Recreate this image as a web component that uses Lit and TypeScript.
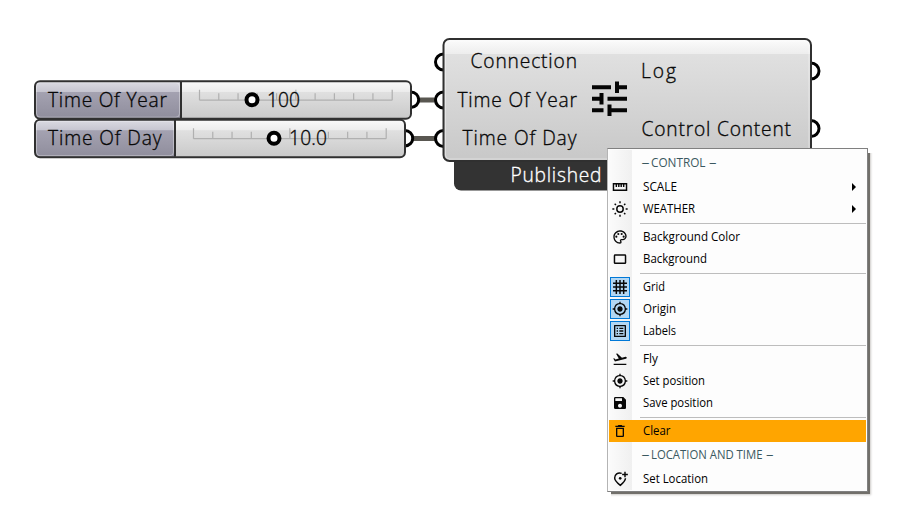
import { LitElement, html, svg, css } from "lit";
import { customElement, property } from "lit/decorators.js";
import { classMap } from "lit/directives/class-map.js";

type Entry =
  | { kind: "item"; label: string; width: number; icon: string; sub?: boolean; checked?: boolean; hot?: boolean }
  | { kind: "head"; label: string; width: number }
  | { kind: "sep" };

const ICONS: Record<string, unknown> = {
  ruler: svg`<path d="M2.2 7h19.6v10h-19.6z M6.5 7v5 M10.2 7v5 M13.8 7v5 M17.5 7v5" class="line"/>`,
  sun: svg`<circle cx="12" cy="12" r="4.8" class="line"/><path class="line" d="M12 .5v3M12 20.500v3M.5 12h3M20.500 12h3M4 4l1.900 1.900M18.100 18.100l1.900 1.900M20 4l-1.900 1.900M5.900 18.100l-1.900 1.900"/>`,
  palette: svg`<path d="M12 22C6.490 22 2 17.510 2 12S6.490 2 12 2s10 4.040 10 9c0 3.310-2.690 6-6 6h-1.770c-.28 0-.5.22-.5.5 0 .12.050.23.130.33.410.47.640 1.060.640 1.670A2.500 2.500 0 0 1 12 22zm0-18c-4.410 0-8 3.590-8 8s3.590 8 8 8c.28 0 .5-.22.5-.5a.54.54 0 0 0-.14-.35c-.41-.46-.63-1.050-.63-1.650a2.500 2.500 0 0 1 2.500-2.500H16c2.210 0 4-1.790 4-4 0-3.860-3.590-7-8-7z"/><circle cx="6.500" cy="11.500" r="1.600"/><circle cx="9.500" cy="7.500" r="1.600"/><circle cx="14.500" cy="7.500" r="1.600"/><circle cx="17.500" cy="11.500" r="1.600"/>`,
  frame: svg`<rect x="3.700" y="6" width="16.600" height="12.500" rx="1" class="line"/>`,
  grid: svg`<path class="line" d="M6.500 1.500v21M12 1.500v21M17.500 1.500v21M1.500 6.500h21M1.500 12h21M1.500 17.500h21"/>`,
  target: svg`<path d="M12 8c-2.210 0-4 1.790-4 4s1.790 4 4 4 4-1.790 4-4-1.790-4-4-4zm8.940 3A8.994 8.994 0 0 0 13 3.060V1h-2v2.060A8.994 8.994 0 0 0 3.060 11H1v2h2.060A8.994 8.994 0 0 0 11 20.940V23h2v-2.060A8.994 8.994 0 0 0 20.940 13H23v-2h-2.060zM12 19c-3.870 0-7-3.130-7-7s3.130-7 7-7 7 3.130 7 7-3.130 7-7 7z"/>`,
  list: svg`<path d="M19 5v14H5V5h14m1.100-2H3.900c-.5 0-.9.4-.9.9v16.200c0 .4.400.9.900.9h16.200c.4 0 .9-.5.900-.9V3.900c0-.5-.5-.9-.9-.9zM11 7h6v2h-6V7zm0 4h6v2h-6v-2zm0 4h6v2h-6zM7 7h2v2H7zm0 4h2v2H7zm0 4h2v2H7z"/>`,
  plane: svg`<path d="M2.500 19h19v2h-19v-2zm19.570-9.360c-.21-.8-1.040-1.280-1.840-1.060L14.920 10l-6.900-6.430-1.930.51 4.140 7.170-4.970 1.330-1.970-1.540-1.450.39 2.590 4.490L21 11.490c.81-.23 1.280-1.050 1.070-1.850z"/>`,
  save: svg`<path d="M17 3H5a2 2 0 0 0-2 2v14a2 2 0 0 0 2 2h14c1.100 0 2-.9 2-2V7l-4-4zm-5 16c-1.660 0-3-1.340-3-3s1.340-3 3-3 3 1.340 3 3-1.340 3-3 3zm3-10H5V5h10v4z"/>`,
  trash: svg`<path d="M6 19c0 1.100.9 2 2 2h8c1.100 0 2-.9 2-2V7H6v12zM8 9h8v10H8V9zm7.500-5l-1-1h-5l-1 1H5v2h14V4z"/>`,
  pin: svg`<path class="line" d="M14.500 3.500C8.500 1.500 4 5.500 4 10.500c0 4.200 4 7.500 8.500 11 4.200-3.500 7.500-6.500 7.700-10.500M19.500 1v8.500M15.200 5.300h8.600"/><circle cx="12.300" cy="11" r="2"/>`,
};

const ENTRIES: Entry[] = [
  { kind: "head", label: "CONTROL", width: 55 },
  { kind: "item", label: "SCALE", width: 34, icon: "ruler", sub: true },
  { kind: "item", label: "WEATHER", width: 52, icon: "sun", sub: true },
  { kind: "sep" },
  { kind: "item", label: "Background Color", width: 97, icon: "palette" },
  { kind: "item", label: "Background", width: 64, icon: "frame" },
  { kind: "sep" },
  { kind: "item", label: "Grid", width: 22, icon: "grid", checked: true },
  { kind: "item", label: "Origin", width: 33, icon: "target", checked: true },
  { kind: "item", label: "Labels", width: 33, icon: "list", checked: true },
  { kind: "sep" },
  { kind: "item", label: "Fly", width: 15, icon: "plane" },
  { kind: "item", label: "Set position", width: 62, icon: "target" },
  { kind: "item", label: "Save position", width: 70, icon: "save" },
  { kind: "sep" },
  { kind: "item", label: "Clear", width: 27.500, icon: "trash", hot: true },
  { kind: "head", label: "LOCATION AND TIME", width: 112 },
  { kind: "item", label: "Set Location", width: 65, icon: "pin" },
];

@customElement("context-menu")
export class ContextMenu extends LitElement {
  @property({ attribute: false }) entries: Entry[] = [];

  static styles = css`
    :host {
      display: block;
      box-sizing: border-box;
      width: 261px;
      height: 344px;
      padding: 1px;
      border: 1px solid #808080;
      border-left-color: #b4b4b4;
      background: linear-gradient(90deg, #fbfbfb, #f0f0f0) 1px 1px / 23px 340px no-repeat, #fdfdfd;
      box-shadow: 1.500px 1.500px 1px rgba(90, 87, 82, 0.8), 3px 3px 2px rgba(60, 50, 40, 0.25);
      clip-path: polygon(0 0, 261px 0, 261px 5px, 270px 5px, 270px 354px, 4px 354px, 4px 344px, 0 344px);
    }
    .row {
      display: flex;
      align-items: center;
      height: 22px;
    }
    .head {
      height: 26px;
      padding-left: 33px;
    }
    .hot { background: #ffa500; }
    .sep {
      height: 6px;
      padding-left: 31px;
    }
    .sep::before {
      content: "";
      flex: 1;
      height: 1px;
      background: #bdbdbd;
    }
    .cell {
      display: flex;
      align-items: center;
      justify-content: center;
      box-sizing: border-box;
      width: 20px;
      height: 20px;
      margin: 0 13px 0 1px;
    }
    .checked {
      background: #b3d7f3;
      border: 1px solid #0078d7;
    }
    .icon {
      flex: none;
      width: 16px;
      height: 16px;
      fill: #080808;
    }
    .line {
      fill: none;
      stroke: #080808;
      stroke-width: 2.200;
    }
    .text {
      height: 18px;
      overflow: visible;
      font: 12.400px "Open Sans", "Noto Sans", sans-serif;
      fill: #000;
    }
    .head .text { fill: #3a5860; }
    .arrow {
      margin-left: auto;
      margin-right: 10px;
      border-left: 4px solid #000;
      border-top: 4px solid transparent;
      border-bottom: 4px solid transparent;
    }
  `;

  private run(label: string, x: number, width: number) {
    return svg`<text x=${x} y="13" textLength=${width} lengthAdjust="spacingAndGlyphs">${label}</text>`;
  }

  render() {
    return this.entries.map((e) => {
      if (e.kind === "sep") return html`<div class="row sep"></div>`;
      if (e.kind === "head") {
        return html`<div class="row head">
          <svg class="text" width=${e.width + 19}>
            ${this.run("–", -0.5, 8)}${this.run(e.label, 9, e.width - 0.5)}${this.run("–", e.width + 12, 7.5)}
          </svg>
        </div>`;
      }
      return html`<div class=${classMap({ row: true, hot: !!e.hot })}>
        <span class=${classMap({ cell: true, checked: !!e.checked })}>
          <svg class="icon" viewBox="0 0 24 24">${ICONS[e.icon]}</svg>
        </span>
        <svg class="text" width=${e.width}>${this.run(e.label, 0, e.width)}</svg>
        ${e.sub ? html`<span class="arrow"></span>` : null}
      </div>`;
    });
  }
}

@customElement("app-root")
export class AppRoot extends LitElement {
  static styles = css`
    :host {
      display: block;
      position: relative;
      width: 915px;
      height: 525px;
      overflow: hidden;
      background: #fff;
    }
    .canvas { display: block; }
    .menu {
      position: absolute;
      left: 607px;
      top: 148px;
    }
    .label {
      font: 300 19.200px "Open Sans", "Noto Sans", sans-serif;
      fill: #080808;
      stroke: #080808;
      stroke-width: 0.350;
    }
    .light { fill: #fff; stroke: #fff; }
    .port { fill: #fff; stroke: #000; stroke-width: 3; }
    .grip { fill: #fff; stroke: #000; stroke-width: 4; }
    .wire { stroke: #595751; stroke-width: 5; }
    .edge { fill: none; stroke: #303030; stroke-width: 2; }
    .tick { fill: none; stroke: #b0b0b0; stroke-width: 1.200; }
    .glyph { stroke: #050505; stroke-width: 4; }
  `;

  private label(value: string, x: number, y: number, width: number, cls = "") {
    return svg`<text class="label ${cls}" x=${x} y=${y} textLength=${width}>${value}</text>`;
  }

  private slider(y: number, right: number, split: number, name: string, nameWidth: number,
    start: number, grip: number, value: string, valueX: number, valueWidth: number) {
    const base = y + 19;
    const ticks = Array.from({ length: 11 }, (_, i) =>
      `M${start + i * 19.270} ${base}v${i % 5 === 0 ? -10.500 : -7}`).join("");
    return svg`
      <circle class="port" cx=${right} cy=${y + 18.500} r="7.700"/>
      <rect x="35" y=${y} width=${right - 35} height="37.500" rx="5" fill="url(#body)"/>
      <path d="M${split} ${y}H40a5 5 0 0 0-5 5v27.500a5 5 0 0 0 5 5H${split}z" fill="url(#name)"/>
      <rect x="36.500" y=${y + 1.500} width=${split - 38} height="34.500" rx="3.500" fill="none" stroke="#fff" stroke-opacity=".35"/>
      <path d="M${split} ${y}v37" class="edge"/>
      <rect x="35" y=${y} width=${right - 35} height="37.500" rx="5" class="edge"/>
      <path class="tick" d="M${start} ${base}h192.700${ticks}"/>
      <circle class="grip" cx=${grip} cy=${y + 18.500} r="5.500"/>
      ${this.label(name, 48, y + 25.500, nameWidth)}
      ${this.label(value, valueX, y + 25.500, valueWidth)}`;
  }

  render() {
    return html`
      <svg class="canvas" width="915" height="525" viewBox="0 0 915 525">
        <defs>
          <linearGradient id="body" x2="0" y2="1">
            <stop offset="0" stop-color="#fafafa"/><stop offset=".28" stop-color="#ececec"/>
            <stop offset=".29" stop-color="#e0e0e0"/><stop offset="1" stop-color="#c9c9c9"/>
          </linearGradient>
          <linearGradient id="name" x2="0" y2="1">
            <stop offset="0" stop-color="#dcdce3"/><stop offset=".28" stop-color="#c6c5d0"/>
            <stop offset=".29" stop-color="#a4a2b1"/><stop offset="1" stop-color="#8f8d9c"/>
          </linearGradient>
          <linearGradient id="node" x2="0" y2="1">
            <stop offset="0" stop-color="#fcfcfc"/><stop offset=".125" stop-color="#ededed"/>
            <stop offset=".126" stop-color="#e0e0e0"/><stop offset="1" stop-color="#c8c8c8"/>
          </linearGradient>
        </defs>
        <path class="wire" d="M419 100h17M413 138.500h23"/>
        ${[62, 100, 138.500].map((y) => svg`<circle class="port" cx="443.500" cy=${y} r="8"/>`)}
        ${[71, 128.500].map((y) => svg`<circle class="port" cx="811" cy=${y} r="8"/>`)}
        ${this.slider(81.200, 411, 181, "Time Of Year", 119, 199.500, 252, "100", 267, 33)}
        ${this.slider(119.700, 405, 175, "Time Of Day", 113.500, 193.500, 274, "10.0", 289, 38)}
        <path d="M454 160H640V190.500H461a7 7 0 0 1-7-7z" fill="#333"/>
        <rect x="443.500" y="39" width="367.500" height="122" rx="6" fill="url(#node)"/>
        <rect x="445.500" y="41" width="363.500" height="118" rx="4" fill="none" stroke="#fff" stroke-opacity=".4"/>
        <rect x="443.500" y="39" width="367.500" height="122" rx="6" class="edge"/>
        ${this.label("Connection", 470.500, 68, 106.500)}
        ${this.label("Time Of Year", 457.500, 106.500, 119.500)}
        ${this.label("Time Of Day", 462.500, 145, 114)}
        ${this.label("Log", 641, 78, 35)}
        ${this.label("Control Content", 641.500, 135.500, 149.500)}
        ${this.label("Published", 510.500, 182, 91, "light")}
        <path class="glyph" d="M592 87.200h19M617 81.500v11.500M617 87.200h10M592 98.700h10M601.500 93v11.500M607.500 98.700h19.500M592 110.300h11.500M609.500 104.500v11.500M609.500 110.300h17.500"/>
      </svg>
      <context-menu class="menu" .entries=${ENTRIES}></context-menu>`;
  }
}
